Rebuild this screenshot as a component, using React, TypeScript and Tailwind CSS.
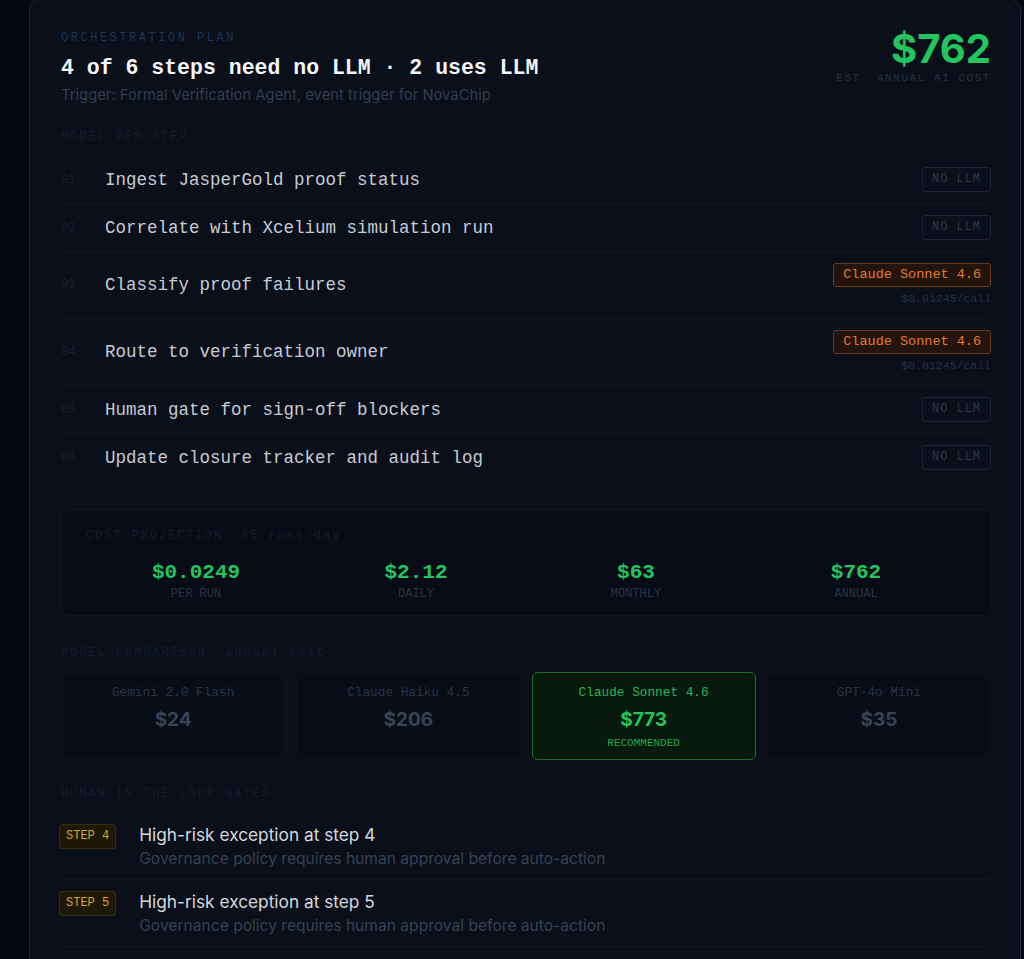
const MONO = "font-['Liberation_Mono','DejaVu_Sans_Mono',monospace]";
const SANS = "font-['Inter','Noto_Sans',sans-serif]";

type Step = { n: string; label: string; model?: string; cost?: string };

const STEPS: Step[] = [
  { n: "01", label: "Ingest JasperGold proof status" },
  { n: "02", label: "Correlate with Xcelium simulation run" },
  { n: "03", label: "Classify proof failures", model: "Claude Sonnet 4.6", cost: "$0.01245/call" },
  { n: "04", label: "Route to verification owner", model: "Claude Sonnet 4.6", cost: "$0.01245/call" },
  { n: "05", label: "Human gate for sign-off blockers" },
  { n: "06", label: "Update closure tracker and audit log" },
];

const PROJECTION = [
  { value: "$0.0249", label: "PER RUN" },
  { value: "$2.12", label: "DAILY" },
  { value: "$63", label: "MONTHLY" },
  { value: "$762", label: "ANNUAL" },
];

const MODELS = [
  { name: "Gemini 2.0 Flash", price: "$24" },
  { name: "Claude Haiku 4.5", price: "$206" },
  { name: "Claude Sonnet 4.6", price: "$773", recommended: true },
  { name: "GPT-4o Mini", price: "$35" },
];

const GATES = [
  { step: 4, title: "High-risk exception at step 4" },
  { step: 5, title: "High-risk exception at step 5" },
];

function SectionLabel({ children, className = "" }: { children: React.ReactNode; className?: string }) {
  return (
    <p className={`${MONO} text-[12px] leading-4 tracking-[0.16em] text-[#151d2a] ${className}`}>
      {children}
    </p>
  );
}

export default function App() {
  return (
    <div className="min-h-screen bg-[#04070d] pl-[29px] pr-[3px]">
      <div className="-mt-[2px] rounded-xl border border-[#1a2a45] bg-[#0a0f1a] pl-[31px] pr-[29px] pt-[31px] pb-10">
        {/* Header */}
        <div className="flex items-start justify-between">
          <div>
            <p className={`${MONO} text-[12px] leading-4 tracking-[0.21em] text-[#1c3456]`}>
              ORCHESTRATION PLAN
            </p>
            <h1 className={`${MONO} mt-2 text-[21.5px] leading-7 font-bold text-[#f3f5f8]`}>
              4 of 6 steps need no LLM · 2 uses LLM
            </h1>
            <p className={`${SANS} mt-[3px] text-[14.8px] leading-5 text-[#323d4e]`}>
              Trigger: Formal Verification Agent, event trigger for NovaChip
            </p>
          </div>
          <div className="flex flex-col items-end">
            <span className={`${SANS} text-[40px] leading-[38px] font-bold text-[#22c55e]`}>$762</span>
            <span className={`${MONO} mt-[2px] text-[11px] leading-4 tracking-[0.14em] text-[#273041]`}>
              EST. ANNUAL AI COST
            </span>
          </div>
        </div>

        {/* Model per step */}
        <SectionLabel className="mt-6">MODEL PER STEP</SectionLabel>
        <div className="mt-[11px] flex flex-col">
          {STEPS.map((s, i) => (
            <div
              key={s.n}
              className={[
                "flex items-center justify-between py-[11px]",
                i < STEPS.length - 1 ? "border-b border-[#0f1624]" : "",
              ].join(" ")}
            >
              <div className="flex items-center">
                <span className={`${MONO} w-11 text-[12px] leading-6 text-[#19212f]`}>{s.n}</span>
                <span className={`${MONO} text-[17.5px] leading-6 text-[#c6cbd3]`}>{s.label}</span>
              </div>
              {s.model ? (
                <div className="flex flex-col items-end gap-1">
                  <span
                    className={`${MONO} h-6 rounded-[3px] border border-[#6a381a] bg-[#23150e] px-[9px] text-[13.5px] leading-[22px] text-[#e57a30]`}
                  >
                    {s.model}
                  </span>
                  <span className={`${MONO} text-[11.5px] leading-4 text-[#263042]`}>{s.cost}</span>
                </div>
              ) : (
                <span
                  className={`${MONO} h-[25px] rounded-[3px] border border-[#1b2537] px-[9px] text-[12px] leading-[23px] tracking-[0.08em] text-[#2a374c]`}
                >
                  NO LLM
                </span>
              )}
            </div>
          ))}
        </div>

        {/* Cost projection */}
        <div className="mt-7 rounded-md border border-[#0e1522] bg-[#080c16] px-6 pt-[18px] pb-[14px]">
          <SectionLabel>COST PROJECTION: 85 runs/day</SectionLabel>
          <div className="mt-[15px] grid grid-cols-4">
            {PROJECTION.map((p) => (
              <div key={p.label} className="flex flex-col items-center">
                <span className={`${MONO} text-[21px] leading-7 font-bold text-[#22c55e]`}>{p.value}</span>
                <span className={`${MONO} text-[12px] leading-[14px] text-[#283244]`}>{p.label}</span>
              </div>
            ))}
          </div>
        </div>

        {/* Model comparison */}
        <SectionLabel className="mt-[29px]">MODEL COMPARISON: annual cost</SectionLabel>
        <div className="mt-[11px] grid grid-cols-4 gap-[11px]">
          {MODELS.map((m) =>
            m.recommended ? (
              <div
                key={m.name}
                className="flex h-[88px] flex-col items-center rounded-md border border-[#1d6a33] bg-[#08190d] pt-3"
              >
                <span className={`${MONO} text-[12.75px] leading-4 text-[#2bb35e]`}>{m.name}</span>
                <span className={`${SANS} mt-[7px] text-[19px] leading-6 font-bold text-[#22c55e]`}>{m.price}</span>
                <span className={`${MONO} mt-1 text-[11px] leading-[14px] text-[#23a552]`}>RECOMMENDED</span>
              </div>
            ) : (
              <div
                key={m.name}
                className="flex h-[88px] flex-col items-center rounded-md border border-[#0d1421] bg-[#090d18] pt-3"
              >
                <span className={`${MONO} text-[12.75px] leading-4 text-[#293344]`}>{m.name}</span>
                <span className={`${SANS} mt-[7px] text-[19px] leading-6 font-bold text-[#394354]`}>{m.price}</span>
              </div>
            )
          )}
        </div>

        {/* Human-in-the-loop gates */}
        <SectionLabel className="mt-[26px]">HUMAN-IN-THE-LOOP GATES</SectionLabel>
        <div className="mt-[11px] flex flex-col">
          {GATES.map((g) => (
            <div key={g.step} className="-ml-[2px] flex items-start gap-[23px] border-b border-[#0f1624] pt-[10px] pb-[10px]">
              <span
                className={`${MONO} mt-px h-[25px] rounded-[3px] border border-[#3a2e0c] bg-[#1e1806] px-[6px] text-[12px] leading-[23px] text-[#d8a42a]`}
              >
                STEP {g.step}
              </span>
              <div>
                <p className={`${SANS} text-[17.3px] leading-6 text-[#d5d9df]`}>{g.title}</p>
                <p className={`${SANS} mt-[2px] text-[15.6px] leading-5 text-[#364152]`}>
                  Governance policy requires human approval before auto-action
                </p>
              </div>
            </div>
          ))}
        </div>
      </div>
    </div>
  );
}
